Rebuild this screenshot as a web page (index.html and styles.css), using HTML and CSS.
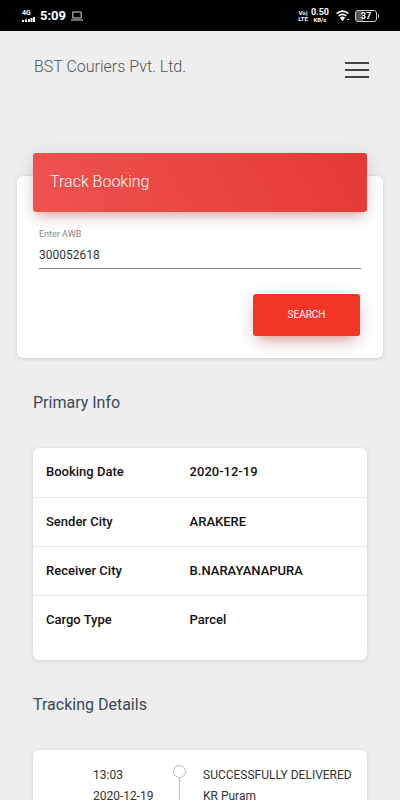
FILE: index.html
```html
<!DOCTYPE html>
<html lang="en">
<head>
  <meta charset="utf-8">
  <meta name="viewport" content="width=device-width, initial-scale=1">
  <title>BST Couriers Pvt. Ltd.</title>
  <link rel="stylesheet" href="styles.css">
</head>
<body>
  <div class="status">
    <div class="status-group">
      <div class="network">
        <span class="carrier">4G</span>
        <svg width="13" height="5" viewBox="0 0 13 5" fill="#fff"><path d="M0 3h2v2H0zM3 2.500h2V5H3zM6 2h2v3H6zM8.500 1h2v4h-2zM11 0h2v5h-2z"/></svg>
      </div>
      <span class="clock">5:09</span>
      <svg class="laptop" width="12" height="10" viewBox="0 0 12 10" fill="none" stroke="#ddd"><path d="M1.800 1h8.400v6H1.800zM0 9h12"/></svg>
    </div>
    <div class="status-group">
      <div class="stack tiny"><span>Vo)</span><span>LTE</span></div>
      <div class="stack speed"><span>0.50</span><span class="tiny">KB/s</span></div>
      <svg class="wifi" width="14" height="11" viewBox="0 0 14 11" fill="none" stroke="#fff" stroke-width="1.500"><path d="M.6 3.600Q6.500-1.400 12.400 3.600M2.600 6Q6.500 2.700 10.400 6M4.400 8.100Q6.500 6.500 8.600 8.100"/><path d="M5 8.500h3L6.500 10.500zM11.500 9.500h1.500" fill="#fff" stroke-width="1"/></svg>
      <div class="battery"><span>37</span></div>
    </div>
  </div>

  <div class="page">
    <header class="topbar">
      <a class="brand" href="#">BST Couriers Pvt. Ltd.</a>
      <button class="menu" type="button" aria-label="Menu"><span></span><span></span><span></span></button>
    </header>

    <main>
      <form class="card search">
        <h1 class="search-title">Track Booking</h1>
        <div class="search-body">
          <label class="label" for="awb">Enter AWB</label>
          <input class="field" id="awb" type="text" value="300052618">
          <button class="submit" type="submit">SEARCH</button>
        </div>
      </form>

      <h2 class="heading">Primary Info</h2>
      <section class="card info">
        <table class="table">
          <tr><th scope="row">Booking Date</th><td>2020-12-19</td></tr>
          <tr><th scope="row">Sender City</th><td>ARAKERE</td></tr>
          <tr><th scope="row">Receiver City</th><td>B.NARAYANAPURA</td></tr>
          <tr><th scope="row">Cargo Type</th><td>Parcel</td></tr>
        </table>
      </section>

      <h2 class="heading">Tracking Details</h2>
      <section class="card timeline">
        <div class="when"><div>13:03</div><div>2020-12-19</div></div>
        <div class="marker"></div>
        <div class="event"><div>SUCCESSFULLY DELIVERED</div><div>KR Puram</div></div>
      </section>
    </main>
  </div>
</body>
</html>
```

FILE: styles.css
```css
*,
*::before,
*::after {
  box-sizing: border-box;
}

body {
  display: flex;
  flex-direction: column;
  height: 100vh;
  margin: 0;
  background: #eee;
  color: #3c4858;
  font-family: Roboto, "Liberation Sans", sans-serif;
  font-size: 13px;
  line-height: 20px;
}

/* Device status bar */
.status {
  display: flex;
  flex: none;
  align-items: center;
  justify-content: space-between;
  height: 31px;
  padding: 0 23px 0 22px;
  background: #000;
  color: #fff;
}

.status-group {
  display: flex;
  align-items: center;
  gap: 5px;
}

.network,
.stack {
  display: flex;
  flex-direction: column;
  align-items: center;
}

.carrier {
  align-self: flex-start;
  font-size: 7px;
  font-weight: 700;
  line-height: 7px;
}

.tiny {
  font-size: 6px;
  font-weight: 700;
  line-height: 6px;
}

.clock {
  font-size: 13px;
  font-weight: 700;
}

.speed {
  font-size: 9px;
  font-weight: 700;
  line-height: 9px;
}

.stack.tiny {
  margin-right: -2px;
}

.wifi {
  margin-left: 2px;
}

.battery {
  position: relative;
  width: 22px;
  height: 12px;
  border: 1px solid #ccc;
  border-radius: 3px;
  background: linear-gradient(90deg, #555 37%, #000 37%);
  font-size: 9px;
  font-weight: 700;
  line-height: 10px;
  text-align: center;
}

.battery::after {
  content: "";
  position: absolute;
  top: 3px;
  right: -3px;
  width: 1px;
  height: 4px;
  background: #ccc;
}

/* Page */
.page {
  flex: 1;
  min-height: 0;
  overflow-y: auto;
  scrollbar-width: none;
}

.topbar {
  display: flex;
  align-items: center;
  justify-content: space-between;
  padding: 20px 31px 20px 34px;
}

.brand {
  color: #555;
  font-size: 16px;
  font-weight: 300;
  line-height: 32px;
  text-decoration: none;
}

.menu {
  display: flex;
  flex-direction: column;
  gap: 5px;
  margin-top: 6px;
  padding: 0;
  border: 0;
  background: none;
}

.menu span {
  width: 24px;
  height: 2px;
  background: #444;
}

main {
  padding: 73px 33px 0;
}

.card {
  border-radius: 6px;
  background: #fff;
  box-shadow: 0 1px 4px rgba(0, 0, 0, 0.14);
}

.search {
  margin: 0 -16px;
  padding: 0 16px 22px;
}

.search-title {
  position: relative;
  top: -23px;
  margin: 0 0 -7px;
  padding: 19px 17px 20px;
  border-radius: 3px;
  background: linear-gradient(60deg, #ef5350, #e53935);
  box-shadow: 0 4px 20px rgba(0, 0, 0, 0.14), 0 7px 10px -5px rgba(244, 67, 54, 0.4);
  color: #fff;
  font-size: 16px;
  font-weight: 300;
  line-height: 20px;
}

.search-body {
  display: flex;
  flex-direction: column;
  padding: 0 6px;
}

.label {
  color: #888;
  font-size: 9px;
  line-height: 12px;
}

.field {
  width: 100%;
  height: 29px;
  margin-bottom: 25px;
  padding: 2px 0 0;
  border: 0;
  border-bottom: 1px solid #888;
  border-radius: 0;
  outline: 0;
  background: none;
  color: #333;
  font: inherit;
  font-size: 12px;
}

.submit {
  align-self: flex-end;
  width: 107px;
  height: 42px;
  margin-right: 1px;
  padding: 0;
  border: 0;
  border-radius: 3px;
  background: #f33527;
  box-shadow: 0 4px 20px rgba(0, 0, 0, 0.14), 0 9px 14px -7px rgba(244, 67, 54, 0.5);
  color: #fff;
  font: inherit;
  font-size: 10px;
}

.heading {
  margin: 33px 0;
  font-size: 16px;
  font-weight: 400;
  line-height: 24px;
}

.info {
  padding-bottom: 16px;
}

.table {
  width: 100%;
  border-collapse: collapse;
  table-layout: fixed;
  color: #111;
}

.table th,
.table td {
  height: 49px;
  padding: 0 13px;
  font-weight: 500;
  text-align: left;
}

.table th {
  width: 43%;
}

.table tr + tr {
  border-top: 1px solid #e8e8e8;
}

.timeline {
  display: grid;
  grid-template-columns: 80px 13px 1fr;
  padding: 15px 0 24px 60px;
  color: #333;
  font-size: 12px;
  line-height: 21px;
  white-space: nowrap;
}

.marker {
  display: flex;
  flex-direction: column;
  align-items: center;
}

.marker::before {
  content: "";
  width: 13px;
  height: 13px;
  border: 1px solid #bbb;
  border-radius: 50%;
}

.marker::after {
  content: "";
  flex: 1;
  width: 1px;
  background: #bbb;
}

.event {
  padding-left: 17px;
}
```
